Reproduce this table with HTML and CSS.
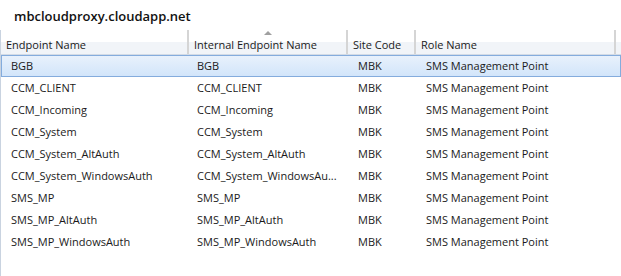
FILE: index.html
```html
<!DOCTYPE html>
<html>
<head>
<meta charset="utf-8">
<link rel="stylesheet" href="styles.css">
</head>
<body>
<div class="panel">
  <div class="title">mbcloudproxy.cloudapp.net</div>
  <div class="grid">
    <div class="head">
      <div class="hc c1">Endpoint Name</div>
      <div class="hc c2"><span class="sort"></span>Internal Endpoint Name</div>
      <div class="hc c3">Site Code</div>
      <div class="hc c4">Role Name</div>
      <div class="hc c5"></div>
    </div>
    <div class="row sel"><div class="c c1">BGB</div><div class="c c2">BGB</div><div class="c c3">MBK</div><div class="c c4">SMS Management Point</div></div>
    <div class="row"><div class="c c1">CCM_CLIENT</div><div class="c c2">CCM_CLIENT</div><div class="c c3">MBK</div><div class="c c4">SMS Management Point</div></div>
    <div class="row"><div class="c c1">CCM_Incoming</div><div class="c c2">CCM_Incoming</div><div class="c c3">MBK</div><div class="c c4">SMS Management Point</div></div>
    <div class="row"><div class="c c1">CCM_System</div><div class="c c2">CCM_System</div><div class="c c3">MBK</div><div class="c c4">SMS Management Point</div></div>
    <div class="row"><div class="c c1">CCM_System_AltAuth</div><div class="c c2">CCM_System_AltAuth</div><div class="c c3">MBK</div><div class="c c4">SMS Management Point</div></div>
    <div class="row"><div class="c c1">CCM_System_WindowsAuth</div><div class="c c2">CCM_System_WindowsAu...</div><div class="c c3">MBK</div><div class="c c4">SMS Management Point</div></div>
    <div class="row"><div class="c c1">SMS_MP</div><div class="c c2">SMS_MP</div><div class="c c3">MBK</div><div class="c c4">SMS Management Point</div></div>
    <div class="row"><div class="c c1">SMS_MP_AltAuth</div><div class="c c2">SMS_MP_AltAuth</div><div class="c c3">MBK</div><div class="c c4">SMS Management Point</div></div>
    <div class="row"><div class="c c1">SMS_MP_WindowsAuth</div><div class="c c2">SMS_MP_WindowsAuth</div><div class="c c3">MBK</div><div class="c c4">SMS Management Point</div></div>
  </div>
</div>
</body>
</html>
```
FILE: styles.css
```css
html, body {
  margin: 0;
  padding: 0;
  background: #ffffff;
}
body {
  width: 621px;
  height: 276px;
  overflow: hidden;
  font-family: "Open Sans", "Noto Sans", sans-serif;
  font-size: 11px;
  color: #1a1a1a;
}
.panel {
  display: flex;
  flex-direction: column;
  height: 276px;
}
.title {
  height: 30px;
  box-sizing: border-box;
  padding: 6px 0 0 14px;
  font-size: 13px;
  font-weight: 600;
  color: #111;
  line-height: 20px;
}
.grid {
  flex: 1;
  border-left: 1px solid #c9d3e0;
}
.head {
  display: flex;
  height: 24px;
  background: linear-gradient(#ffffff 0, #ffffff 50%, #f1f4f8 50%, #f1f4f8 100%);
  border-bottom: 1px solid #d3dbe6;
}
.hc {
  box-sizing: border-box;
  height: 24px;
  line-height: 29px;
  padding-left: 5px;
  border-right: 2px solid #d5d5d5;
  position: relative;
  white-space: nowrap;
  overflow: hidden;
}
.c1 { width: 188px; }
.c2 { width: 159px; }
.c3 { width: 68px; }
.c4 { width: 200px; }
.c5 { flex: 1; border-right: none; }
.hc.c5 { padding: 0; }
.sort {
  position: absolute;
  left: 75px;
  top: 1px;
  width: 0;
  height: 0;
  border-left: 4px solid transparent;
  border-right: 4px solid transparent;
  border-bottom: 4px solid #a0a0a0;
}
.row {
  display: flex;
  height: 22px;
  box-sizing: border-box;
  border: 1px solid transparent;
  line-height: 20px;
}
.row.sel {
  border-color: #84acdd;
  background: linear-gradient(#e8f1fc, #d2e5fa);
}
.c {
  box-sizing: border-box;
  padding-left: 8px;
  white-space: nowrap;
  overflow: hidden;
}
.row .c1 { width: 187px; padding-left: 9px; }
.row .c2 { width: 161px; }
.row .c3 { width: 68px; }
.row .c4 { width: 200px; }
```
